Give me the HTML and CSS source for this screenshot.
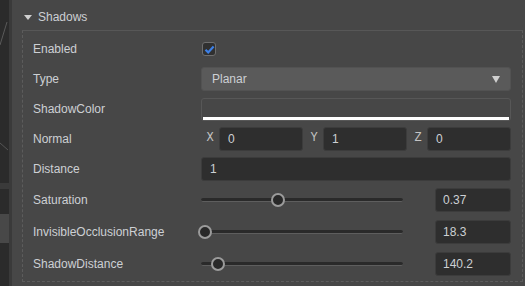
FILE: index.html
```html
<html>
<head>
<link rel="stylesheet" href="styles.css">
</head>
<body>
<div class="page">
    <div class="side">
        <svg width="12" height="286" viewBox="0 0 12 286">
            <rect x="0" y="0" width="9" height="286" fill="#2b2b2b"/>
            <line x1="0" y1="45" x2="7" y2="22" stroke="#5a5a5a" stroke-width="1"/>
            <line x1="0" y1="143" x2="8" y2="150" stroke="#555" stroke-width="1"/>
            <rect x="0" y="183" width="9" height="6" fill="#3a3a3a"/>
            <rect x="0" y="214" width="9" height="29" fill="#484848"/>
            <rect x="9" y="0" width="3" height="286" fill="#3a3a3a"/>
        </svg>
    </div>
    <div class="panel">
        <div class="section-head"><span class="caret"></span>Shadows</div>
        <div class="section">
            <div class="row">
                <div class="label">Enabled</div>
                <div class="ctrl"><span class="check"><svg width="11" height="11" viewBox="0 0 11 11"><path d="M1.5 5.8 L4.2 8.4 L9.6 2.4" fill="none" stroke="#3d80e6" stroke-width="2.2"/></svg></span></div>
            </div>
            <div class="row">
                <div class="label">Type</div>
                <div class="ctrl"><div class="select">Planar<span class="arrow"></span></div></div>
            </div>
            <div class="row">
                <div class="label">ShadowColor</div>
                <div class="ctrl"><div class="color"><div class="swatch"></div></div></div>
            </div>
            <div class="row">
                <div class="label">Normal</div>
                <div class="ctrl vec">
                    <div class="axis"><span class="axis-name">X</span><div class="field">0</div></div>
                    <div class="axis"><span class="axis-name">Y</span><div class="field">1</div></div>
                    <div class="axis"><span class="axis-name">Z</span><div class="field">0</div></div>
                </div>
            </div>
            <div class="row">
                <div class="label">Distance</div>
                <div class="ctrl"><div class="field">1</div></div>
            </div>
            <div class="row tall">
                <div class="label">Saturation</div>
                <div class="ctrl slide">
                    <div class="track"><span class="thumb" style="left:70px"></span></div>
                    <div class="field num">0.37</div>
                </div>
            </div>
            <div class="row tall">
                <div class="label">InvisibleOcclusionRange</div>
                <div class="ctrl slide">
                    <div class="track"><span class="thumb" style="left:-3px"></span></div>
                    <div class="field num">18.3</div>
                </div>
            </div>
            <div class="row tall">
                <div class="label">ShadowDistance</div>
                <div class="ctrl slide">
                    <div class="track"><span class="thumb" style="left:10px"></span></div>
                    <div class="field num">140.2</div>
                </div>
            </div>
        </div>
    </div>
</div>
</body>
</html>
```

FILE: styles.css
```css
body {
    margin: 0;
    background-color: #474747;
    font-family: "Liberation Sans", Arial, sans-serif;
    font-size: 12px;
    color: #cdd0d4;
}
.page {
    display: flex;
    width: 525px;
    height: 286px;
    overflow: hidden;
}
.side {
    width: 12px;
    flex: none;
}
.side svg {
    display: block;
}
.panel {
    flex: 1;
    background-color: #474747;
}
.section-head {
    display: flex;
    align-items: center;
    height: 26px;
    padding-top: 4px;
    padding-left: 12px;
}
.caret {
    width: 0;
    height: 0;
    border-left: 4px solid transparent;
    border-right: 4px solid transparent;
    border-top: 5px solid #d0d0d0;
    margin-right: 6px;
    margin-top: 1px;
}
.section {
    margin: 0 2px 0 10px;
    border: 1px dashed #5c5c5c;
    border-top: 1px solid #575757;
    padding: 3px 11px 0 10px;
    height: 247px;
}
.row {
    display: flex;
    align-items: center;
    height: 30px;
}
.row.tall {
    height: 32px;
}
.label {
    width: 168px;
    flex: none;
}
.ctrl {
    flex: 1;
    display: flex;
    align-items: center;
}
.check {
    display: flex;
    align-items: center;
    justify-content: center;
    width: 12px;
    height: 12px;
    border: 1px solid #6e6e6e;
    border-radius: 3px;
    background-color: #303030;
    margin-left: 1px;
}
.select {
    flex: 1;
    display: flex;
    align-items: center;
    justify-content: space-between;
    height: 24px;
    box-sizing: border-box;
    padding: 0 10px;
    background-color: #5a5a5a;
    border: 1px solid #525252;
    border-radius: 3px;
}
.arrow {
    width: 0;
    height: 0;
    border-left: 4px solid transparent;
    border-right: 4px solid transparent;
    border-top: 7px solid #cfcfcf;
}
.color {
    flex: 1;
    height: 23px;
    box-sizing: border-box;
    border: 1px solid #575757;
    border-radius: 3px;
    display: flex;
    align-items: flex-end;
    padding: 0 1px;
}
.swatch {
    flex: 1;
    height: 3px;
    background-color: #ffffff;
}
.field {
    flex: 1;
    height: 24px;
    box-sizing: border-box;
    display: flex;
    align-items: center;
    padding: 0 8px;
    background-color: #2e2e2e;
    border: 1px solid #3c3c3c;
    border-radius: 3px;
}
.vec {
    gap: 2px;
}
.axis {
    flex: 1;
    display: flex;
    align-items: center;
}
.axis-name {
    width: 18px;
    text-align: center;
    font-family: "Liberation Mono", "DejaVu Sans Mono", monospace;
    font-size: 12px;
    color: #c4c4c4;
    margin-top: -3px;
}
.slide {
    justify-content: space-between;
}
.track {
    position: relative;
    width: 202px;
    height: 3px;
    background-color: #2a2a2a;
    border-bottom: 1px solid #5e5e5e;
    border-radius: 2px;
}
.thumb {
    position: absolute;
    top: -5px;
    width: 10px;
    height: 10px;
    border: 2px solid #9b9b9b;
    border-radius: 50%;
    background-color: #282828;
}
.field.num {
    flex: none;
    width: 76px;
    padding-left: 7px;
}
```
